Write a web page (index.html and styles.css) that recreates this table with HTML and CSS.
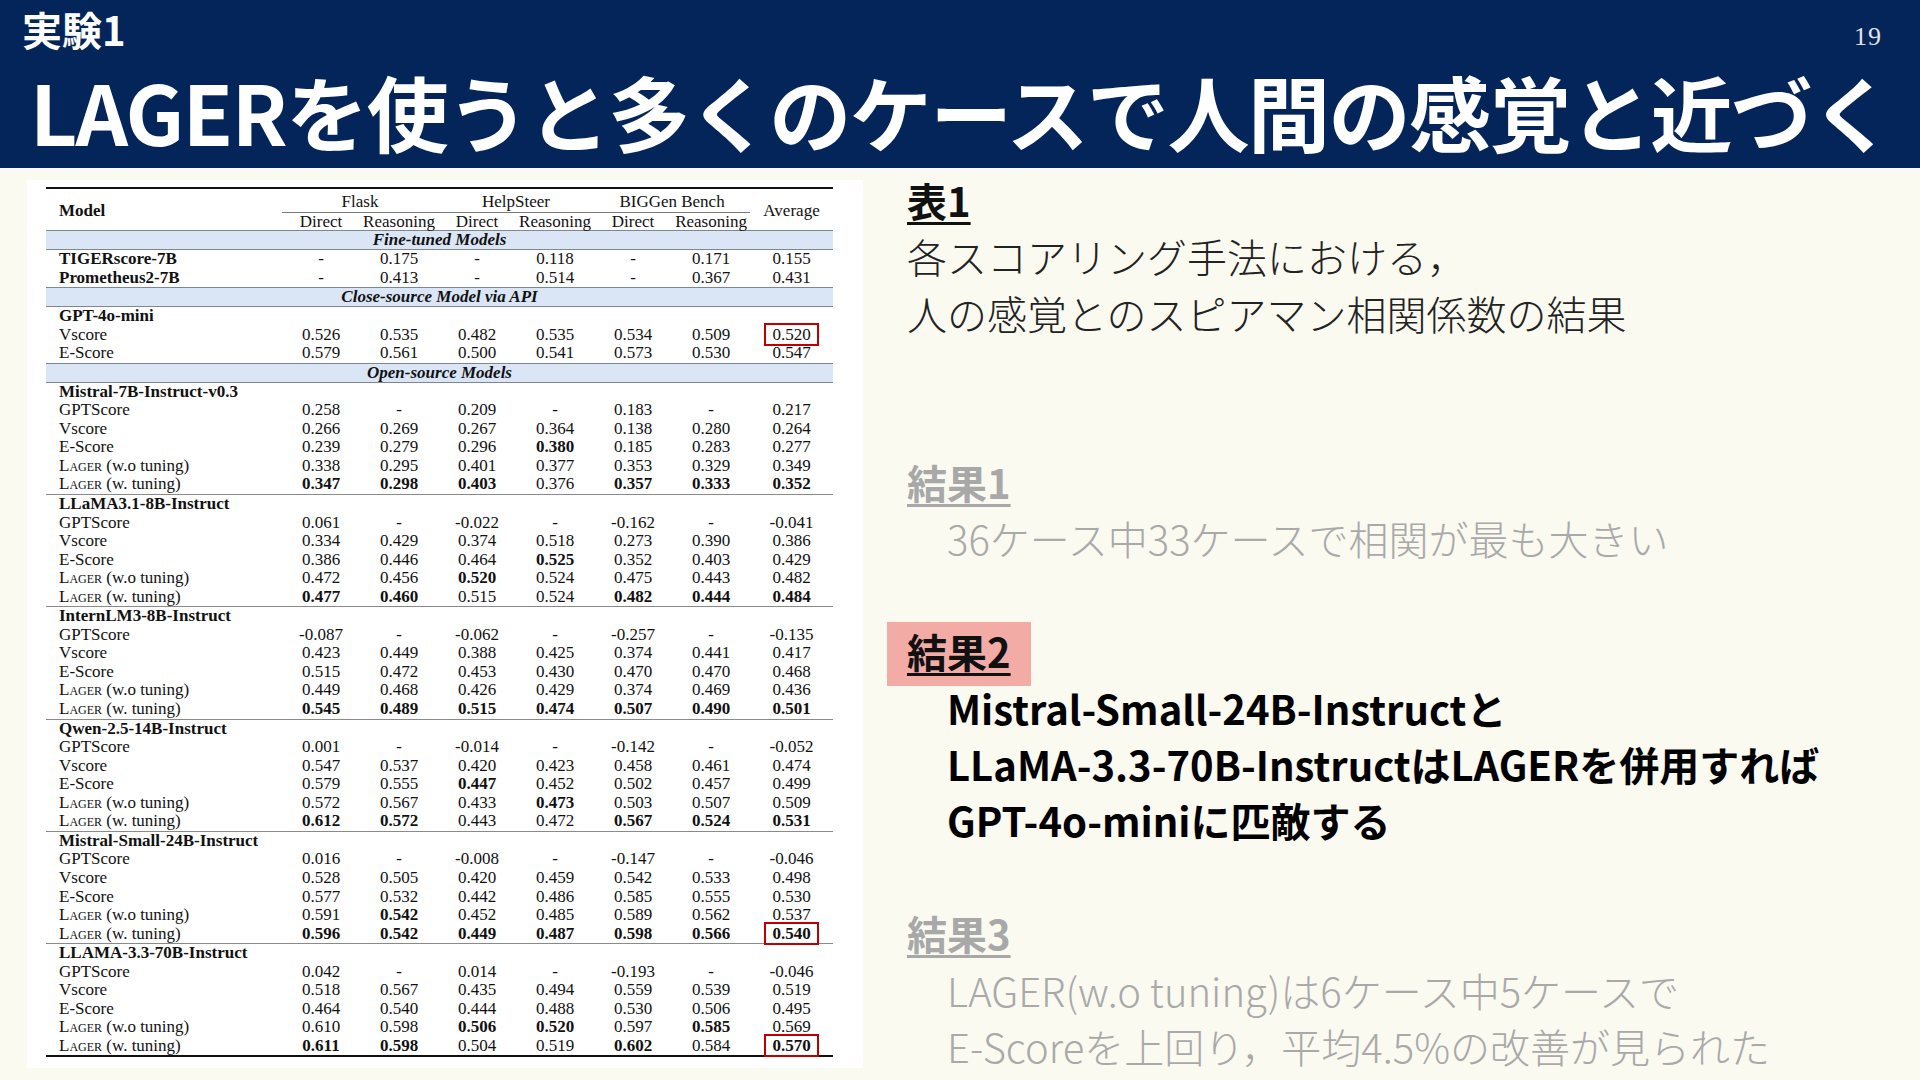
FILE: index.html
```html
<!DOCTYPE html>
<html lang="ja">
<head>
<meta charset="utf-8">
<title>実験1</title>
<link rel="stylesheet" href="styles.css">
</head>
<body>
<header class="header">
  <div class="top">
    <div class="section">実験1</div>
    <div class="page">19</div>
  </div>
  <h1 class="title">LAGERを使うと多くのケースで人間の感覚と近づく</h1>
</header>
<main class="main">
  <section class="panel">
    <table class="tbl">
      <colgroup>
        <col class="c-model"><col class="c-num"><col class="c-num"><col class="c-num"><col class="c-num"><col class="c-num"><col class="c-num"><col class="c-avg">
      </colgroup>
      <thead>
        <tr class="h1">
          <th rowspan="2" class="lbl b">Model</th>
          <th colspan="2" class="grp-h">Flask</th>
          <th colspan="2" class="grp-h">HelpSteer</th>
          <th colspan="2" class="grp-h">BIGGen Bench</th>
          <th rowspan="2">Average</th>
        </tr>
        <tr class="h2">
          <th>Direct</th><th>Reasoning</th><th>Direct</th><th>Reasoning</th><th>Direct</th><th>Reasoning</th>
        </tr>
      </thead>
      <tbody>
        <tr class="band"><td colspan="8">Fine-tuned Models</td></tr>
        <tr><td class="lbl b">TIGERscore-7B</td><td>-</td><td>0.175</td><td>-</td><td>0.118</td><td>-</td><td>0.171</td><td>0.155</td></tr>
        <tr><td class="lbl b">Prometheus2-7B</td><td>-</td><td>0.413</td><td>-</td><td>0.514</td><td>-</td><td>0.367</td><td>0.431</td></tr>
        <tr class="band"><td colspan="8">Close-source Model via API</td></tr>
        <tr class="grp"><td colspan="8">GPT-4o-mini</td></tr>
        <tr><td class="lbl">Vscore</td><td>0.526</td><td>0.535</td><td>0.482</td><td>0.535</td><td>0.534</td><td>0.509</td><td><span class="redbox">0.520</span></td></tr>
        <tr><td class="lbl">E-Score</td><td>0.579</td><td>0.561</td><td>0.500</td><td>0.541</td><td>0.573</td><td>0.530</td><td>0.547</td></tr>
        <tr class="band"><td colspan="8">Open-source Models</td></tr>

        <tr class="grp"><td colspan="8">Mistral-7B-Instruct-v0.3</td></tr>
        <tr><td class="lbl">GPTScore</td><td>0.258</td><td>-</td><td>0.209</td><td>-</td><td>0.183</td><td>-</td><td>0.217</td></tr>
        <tr><td class="lbl">Vscore</td><td>0.266</td><td>0.269</td><td>0.267</td><td>0.364</td><td>0.138</td><td>0.280</td><td>0.264</td></tr>
        <tr><td class="lbl">E-Score</td><td>0.239</td><td>0.279</td><td>0.296</td><td><b>0.380</b></td><td>0.185</td><td>0.283</td><td>0.277</td></tr>
        <tr><td class="lbl"><span class="sc">Lager</span> (w.o tuning)</td><td>0.338</td><td>0.295</td><td>0.401</td><td>0.377</td><td>0.353</td><td>0.329</td><td>0.349</td></tr>
        <tr class="end"><td class="lbl"><span class="sc">Lager</span> (w. tuning)</td><td><b>0.347</b></td><td><b>0.298</b></td><td><b>0.403</b></td><td>0.376</td><td><b>0.357</b></td><td><b>0.333</b></td><td><b>0.352</b></td></tr>

        <tr class="grp"><td colspan="8">LLaMA3.1-8B-Instruct</td></tr>
        <tr><td class="lbl">GPTScore</td><td>0.061</td><td>-</td><td>-0.022</td><td>-</td><td>-0.162</td><td>-</td><td>-0.041</td></tr>
        <tr><td class="lbl">Vscore</td><td>0.334</td><td>0.429</td><td>0.374</td><td>0.518</td><td>0.273</td><td>0.390</td><td>0.386</td></tr>
        <tr><td class="lbl">E-Score</td><td>0.386</td><td>0.446</td><td>0.464</td><td><b>0.525</b></td><td>0.352</td><td>0.403</td><td>0.429</td></tr>
        <tr><td class="lbl"><span class="sc">Lager</span> (w.o tuning)</td><td>0.472</td><td>0.456</td><td><b>0.520</b></td><td>0.524</td><td>0.475</td><td>0.443</td><td>0.482</td></tr>
        <tr class="end"><td class="lbl"><span class="sc">Lager</span> (w. tuning)</td><td><b>0.477</b></td><td><b>0.460</b></td><td>0.515</td><td>0.524</td><td><b>0.482</b></td><td><b>0.444</b></td><td><b>0.484</b></td></tr>

        <tr class="grp"><td colspan="8">InternLM3-8B-Instruct</td></tr>
        <tr><td class="lbl">GPTScore</td><td>-0.087</td><td>-</td><td>-0.062</td><td>-</td><td>-0.257</td><td>-</td><td>-0.135</td></tr>
        <tr><td class="lbl">Vscore</td><td>0.423</td><td>0.449</td><td>0.388</td><td>0.425</td><td>0.374</td><td>0.441</td><td>0.417</td></tr>
        <tr><td class="lbl">E-Score</td><td>0.515</td><td>0.472</td><td>0.453</td><td>0.430</td><td>0.470</td><td>0.470</td><td>0.468</td></tr>
        <tr><td class="lbl"><span class="sc">Lager</span> (w.o tuning)</td><td>0.449</td><td>0.468</td><td>0.426</td><td>0.429</td><td>0.374</td><td>0.469</td><td>0.436</td></tr>
        <tr class="end"><td class="lbl"><span class="sc">Lager</span> (w. tuning)</td><td><b>0.545</b></td><td><b>0.489</b></td><td><b>0.515</b></td><td><b>0.474</b></td><td><b>0.507</b></td><td><b>0.490</b></td><td><b>0.501</b></td></tr>

        <tr class="grp"><td colspan="8">Qwen-2.5-14B-Instruct</td></tr>
        <tr><td class="lbl">GPTScore</td><td>0.001</td><td>-</td><td>-0.014</td><td>-</td><td>-0.142</td><td>-</td><td>-0.052</td></tr>
        <tr><td class="lbl">Vscore</td><td>0.547</td><td>0.537</td><td>0.420</td><td>0.423</td><td>0.458</td><td>0.461</td><td>0.474</td></tr>
        <tr><td class="lbl">E-Score</td><td>0.579</td><td>0.555</td><td><b>0.447</b></td><td>0.452</td><td>0.502</td><td>0.457</td><td>0.499</td></tr>
        <tr><td class="lbl"><span class="sc">Lager</span> (w.o tuning)</td><td>0.572</td><td>0.567</td><td>0.433</td><td><b>0.473</b></td><td>0.503</td><td>0.507</td><td>0.509</td></tr>
        <tr class="end"><td class="lbl"><span class="sc">Lager</span> (w. tuning)</td><td><b>0.612</b></td><td><b>0.572</b></td><td>0.443</td><td>0.472</td><td><b>0.567</b></td><td><b>0.524</b></td><td><b>0.531</b></td></tr>

        <tr class="grp"><td colspan="8">Mistral-Small-24B-Instruct</td></tr>
        <tr><td class="lbl">GPTScore</td><td>0.016</td><td>-</td><td>-0.008</td><td>-</td><td>-0.147</td><td>-</td><td>-0.046</td></tr>
        <tr><td class="lbl">Vscore</td><td>0.528</td><td>0.505</td><td>0.420</td><td>0.459</td><td>0.542</td><td>0.533</td><td>0.498</td></tr>
        <tr><td class="lbl">E-Score</td><td>0.577</td><td>0.532</td><td>0.442</td><td>0.486</td><td>0.585</td><td>0.555</td><td>0.530</td></tr>
        <tr><td class="lbl"><span class="sc">Lager</span> (w.o tuning)</td><td>0.591</td><td><b>0.542</b></td><td>0.452</td><td>0.485</td><td>0.589</td><td>0.562</td><td>0.537</td></tr>
        <tr class="end"><td class="lbl"><span class="sc">Lager</span> (w. tuning)</td><td><b>0.596</b></td><td><b>0.542</b></td><td><b>0.449</b></td><td><b>0.487</b></td><td><b>0.598</b></td><td><b>0.566</b></td><td><span class="redbox"><b>0.540</b></span></td></tr>

        <tr class="grp"><td colspan="8">LLAMA-3.3-70B-Instruct</td></tr>
        <tr><td class="lbl">GPTScore</td><td>0.042</td><td>-</td><td>0.014</td><td>-</td><td>-0.193</td><td>-</td><td>-0.046</td></tr>
        <tr><td class="lbl">Vscore</td><td>0.518</td><td>0.567</td><td>0.435</td><td>0.494</td><td>0.559</td><td>0.539</td><td>0.519</td></tr>
        <tr><td class="lbl">E-Score</td><td>0.464</td><td>0.540</td><td>0.444</td><td>0.488</td><td>0.530</td><td>0.506</td><td>0.495</td></tr>
        <tr><td class="lbl"><span class="sc">Lager</span> (w.o tuning)</td><td>0.610</td><td>0.598</td><td><b>0.506</b></td><td><b>0.520</b></td><td>0.597</td><td><b>0.585</b></td><td>0.569</td></tr>
        <tr class="last"><td class="lbl"><span class="sc">Lager</span> (w. tuning)</td><td><b>0.611</b></td><td><b>0.598</b></td><td>0.504</td><td>0.519</td><td><b>0.602</b></td><td>0.584</td><td><span class="redbox"><b>0.570</b></span></td></tr>
      </tbody>
    </table>
  </section>

  <section class="notes">
    <div class="blk">
      <div class="hd"><span class="ul">表1</span></div>
      <div class="txt">各スコアリング手法における，</div>
      <div class="txt">人の感覚とのスピアマン相関係数の結果</div>
    </div>
    <div class="blk gap2 muted">
      <div class="hd"><span class="ul">結果1</span></div>
      <div class="txt ind">36ケース中33ケースで相関が最も大きい</div>
    </div>
    <div class="blk">
      <div class="hd"><span class="ul hl">結果2</span></div>
      <div class="strong ind">Mistral-Small-24B-Instructと</div>
      <div class="strong ind">LLaMA-3.3-70B-InstructはLAGERを併用すれば</div>
      <div class="strong ind">GPT-4o-miniに匹敵する</div>
    </div>
    <div class="blk muted">
      <div class="hd"><span class="ul">結果3</span></div>
      <div class="txt ind">LAGER(w.o tuning)は6ケース中5ケースで</div>
      <div class="txt ind">E-Scoreを上回り，平均4.5%の改善が見られた</div>
    </div>
  </section>
</main>
</body>
</html>
```

FILE: styles.css
```css
* { box-sizing: border-box; }
html, body { margin: 0; padding: 0; }
body {
  width: 1920px;
  height: 1080px;
  overflow: hidden;
  background: #fafaf1;
  font-family: "Noto Sans CJK JP", "Noto Sans", sans-serif;
  color: #1c1c1c;
}

/* header */
.header {
  height: 168px;
  background: #03255a;
  color: #ffffff;
  padding: 0 38px 0 22px;
}
.top {
  display: flex;
  justify-content: space-between;
  align-items: flex-start;
}
.section {
  font-size: 40px;
  font-weight: 700;
  line-height: 58px;
}
.page {
  font-family: "Liberation Serif", serif;
  font-size: 26px;
  line-height: 28px;
  letter-spacing: 1px;
  margin-top: 23px;
  color: #e4e4e4;
}
.title {
  margin: 3px 0 0 8px;
  font-size: 82px;
  font-weight: 700;
  line-height: 100px;
  letter-spacing: -1.5px;
  white-space: nowrap;
}

/* main */
.main {
  display: flex;
  padding: 12px 0 0 27px;
}
.panel {
  flex: none;
  width: 836px;
  height: 888px;
  background: #ffffff;
  padding: 7px 0 0 19px;
}

/* table */
.tbl {
  border-collapse: collapse;
  table-layout: fixed;
  width: 787px;
  font-family: "Liberation Serif", "Times New Roman", serif;
  font-size: 17px;
  color: #111111;
  border-top: 2px solid #111111;
  border-bottom: 2px solid #111111;
}
.c-model { width: 236px; }
.c-num { width: 78px; }
.c-avg { width: 83px; }
.tbl th, .tbl td {
  padding: 0;
  height: 18.55px;
  line-height: 18.55px;
  text-align: center;
  font-weight: 400;
  white-space: nowrap;
}
.tbl .h1 th { height: 23px; line-height: 20px; padding-top: 3px; }
.tbl .h2 th { height: 17px; line-height: 17px; }
.tbl .grp-h { border-bottom: 1.5px solid #7a7a7a; }
.tbl .lbl { text-align: left; padding-left: 13px; }
.tbl .b { font-weight: 700; }
.tbl b { font-weight: 700; }
.sc { font-variant: small-caps; }

.tbl .band td {
  background: #dae6f6;
  border-top: 1.5px solid #7e8894;
  border-bottom: 1.5px solid #7e8894;
  font-weight: 700;
  font-style: italic;
  height: 18px;
  line-height: 18px;
}
.tbl .grp td {
  text-align: left;
  padding-left: 13px;
  font-weight: 700;
}
.tbl .end td { border-bottom: 1px solid #8a8a8a; }

.redbox {
  padding: 0 6px;
  outline: 2.5px solid #c00000;
}

/* notes */
.notes {
  margin: -8px 0 0 44px;
  font-size: 40px;
  line-height: 56.4px;
  white-space: nowrap;
}
.blk + .blk { margin-top: 56.4px; }
.blk.gap2 { margin-top: 112.8px; }
.hd { font-weight: 700; color: #111111; }
.muted .hd { color: #a8a8a8; }
.ul {
  text-decoration: underline;
  text-decoration-thickness: 3px;
  text-underline-offset: 5px;
}
.hl {
  background: #f3aba6;
  padding: 0 20px 6px 20px;
  margin-left: -20px;
}
.txt { font-weight: 300; color: #222222; }
.muted .txt { color: #a9a9a9; }
.ind { padding-left: 40px; }
.strong { font-weight: 700; color: #000000; }
```
